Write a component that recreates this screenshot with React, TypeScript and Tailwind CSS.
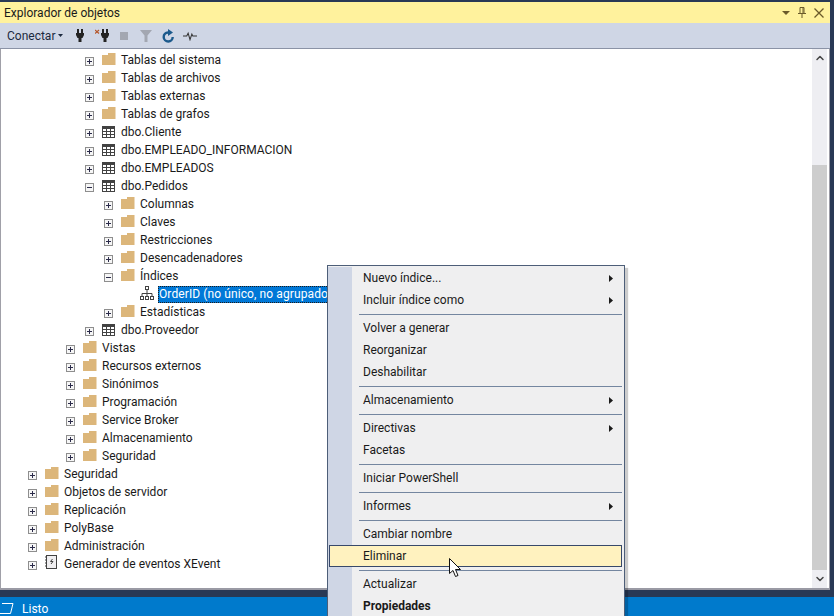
import React from 'react';
import { ChevronUp, ChevronDown } from 'lucide-react';

type IconKind = 'folder' | 'table' | 'index' | 'xevent';
type Row = { label: string; level: 0 | 1 | 2 | 3 | 4; icon: IconKind; state: 'plus' | 'minus' | 'none'; selected?: boolean };

const rows: Row[] = [
  { label: 'Tablas del sistema', level: 2, icon: 'folder', state: 'plus' },
  { label: 'Tablas de archivos', level: 2, icon: 'folder', state: 'plus' },
  { label: 'Tablas externas', level: 2, icon: 'folder', state: 'plus' },
  { label: 'Tablas de grafos', level: 2, icon: 'folder', state: 'plus' },
  { label: 'dbo.Cliente', level: 2, icon: 'table', state: 'plus' },
  { label: 'dbo.EMPLEADO_INFORMACION', level: 2, icon: 'table', state: 'plus' },
  { label: 'dbo.EMPLEADOS', level: 2, icon: 'table', state: 'plus' },
  { label: 'dbo.Pedidos', level: 2, icon: 'table', state: 'minus' },
  { label: 'Columnas', level: 3, icon: 'folder', state: 'plus' },
  { label: 'Claves', level: 3, icon: 'folder', state: 'plus' },
  { label: 'Restricciones', level: 3, icon: 'folder', state: 'plus' },
  { label: 'Desencadenadores', level: 3, icon: 'folder', state: 'plus' },
  { label: 'Índices', level: 3, icon: 'folder', state: 'minus' },
  { label: 'OrderID (no único, no agrupado)', level: 4, icon: 'index', state: 'none', selected: true },
  { label: 'Estadísticas', level: 3, icon: 'folder', state: 'plus' },
  { label: 'dbo.Proveedor', level: 2, icon: 'table', state: 'plus' },
  { label: 'Vistas', level: 1, icon: 'folder', state: 'plus' },
  { label: 'Recursos externos', level: 1, icon: 'folder', state: 'plus' },
  { label: 'Sinónimos', level: 1, icon: 'folder', state: 'plus' },
  { label: 'Programación', level: 1, icon: 'folder', state: 'plus' },
  { label: 'Service Broker', level: 1, icon: 'folder', state: 'plus' },
  { label: 'Almacenamiento', level: 1, icon: 'folder', state: 'plus' },
  { label: 'Seguridad', level: 1, icon: 'folder', state: 'plus' },
  { label: 'Seguridad', level: 0, icon: 'folder', state: 'plus' },
  { label: 'Objetos de servidor', level: 0, icon: 'folder', state: 'plus' },
  { label: 'Replicación', level: 0, icon: 'folder', state: 'plus' },
  { label: 'PolyBase', level: 0, icon: 'folder', state: 'plus' },
  { label: 'Administración', level: 0, icon: 'folder', state: 'plus' },
  { label: 'Generador de eventos XEvent', level: 0, icon: 'xevent', state: 'plus' },
];

const indent = { 0: 'pl-[27px]', 1: 'pl-[65px]', 2: 'pl-[84px]', 3: 'pl-[103px]', 4: 'pl-[122px]' };

type MenuEntry = { label?: string; arrow?: boolean; hot?: boolean; bold?: boolean };
const menu: MenuEntry[] = [
  { label: 'Nuevo índice...', arrow: true },
  { label: 'Incluir índice como', arrow: true },
  {},
  { label: 'Volver a generar' },
  { label: 'Reorganizar' },
  { label: 'Deshabilitar' },
  {},
  { label: 'Almacenamiento', arrow: true },
  {},
  { label: 'Directivas', arrow: true },
  { label: 'Facetas' },
  {},
  { label: 'Iniciar PowerShell' },
  {},
  { label: 'Informes', arrow: true },
  {},
  { label: 'Cambiar nombre' },
  { label: 'Eliminar', hot: true },
  {},
  { label: 'Actualizar' },
  { label: 'Propiedades', bold: true },
];

function Expander({ state }: { state: Row['state'] }) {
  if (state === 'none') return <span className="w-[10px] shrink-0" />;
  return (
    <svg width="10" height="10" viewBox="0 0 10 10" className="shrink-0 mt-[3px]">
      <rect x="0.5" y="0.5" width="8" height="8" fill="#f6f6f6" stroke="#8e8e8e" />
      <path d={state === 'plus' ? 'M2 4.5h5M4.5 2v5' : 'M2 4.5h5'} stroke="#2b2b4a" fill="none" />
    </svg>
  );
}

function TreeIcon({ kind }: { kind: IconKind }) {
  if (kind === 'folder') {
    return (
      <svg width="14" height="12" viewBox="0 0 14 12" className="shrink-0 self-start mt-[2px]">
        <path d="M0 2h6V0h7.5v12H0z" fill="#dcb67a" />
      </svg>
    );
  }
  if (kind === 'table') {
    return (
      <svg width="14" height="12" viewBox="0 0 14 12" className="shrink-0 self-start mt-[3px]">
        <rect x="0.5" y="0.5" width="12" height="11" fill="#fff" stroke="#424242" />
        <rect x="0" y="0" width="13" height="3" fill="#424242" />
        <path d="M0.5 5.5h12M0.5 8.5h12M4.5 3v8M8.5 3v8" stroke="#424242" fill="none" />
      </svg>
    );
  }
  if (kind === 'index') {
    return (
      <svg width="14" height="14" viewBox="0 0 14 14" className="shrink-0 self-start mt-[1px]">
        <rect x="5.5" y="0.5" width="3" height="3" fill="#fff" stroke="#424242" />
        <rect x="0.5" y="10.5" width="3" height="3" fill="#fff" stroke="#424242" />
        <rect x="5.5" y="10.5" width="3" height="3" fill="#fff" stroke="#424242" />
        <rect x="10.5" y="10.5" width="3" height="3" fill="#fff" stroke="#424242" />
        <path d="M7 4v6M2 10V7.5h10V10" stroke="#424242" fill="none" />
      </svg>
    );
  }
  return (
    <svg width="14" height="14" viewBox="0 0 14 14" className="shrink-0 self-start">
      <rect x="1.5" y="0.5" width="10" height="13" fill="#f0eff1" stroke="#424242" />
      <path d="M0 2h2M0 5h2M0 8h2M0 11h2" stroke="#424242" fill="none" />
      <path d="M7.5 4L5.5 6.5h2.500L6 9" stroke="#424242" fill="none" />
    </svg>
  );
}

function TreeRow({ row }: { row: Row }) {
  return (
    <div className={`h-[18px] flex items-center ${indent[row.level]}`}>
      <Expander state={row.state} />
      <span className="w-[7px] shrink-0" />
      <TreeIcon kind={row.icon} />
      {row.selected ? (
        <span className="ml-[4px] h-[17px] leading-[15px] tracking-[0.1px] bg-[#0078d7] text-white border border-dotted border-[#1c1c1c] whitespace-nowrap">
          {row.label}
        </span>
      ) : (
        <span className="ml-[5px] text-[#1a1a1a] whitespace-nowrap">{row.label}</span>
      )}
    </div>
  );
}

function ToolbarIcons() {
  return (
    <div className="flex items-center">
      <svg width="8" height="13" viewBox="0 0 8 13" className="ml-[13px]">
        <path d="M1 0h2v4H1zM5 0h2v4H5zM0 4h8v2L6.500 9H5.500v4h-3V9H1.500L0 6z" fill="#232323" />
      </svg>
      <svg width="14" height="13" viewBox="0 0 14 13" className="ml-[11px]">
        <path d="M7 0h2v4H7zM11 0h2v4h-2zM6 4h8v2l-1.500 3h-1v4h-3V9h-1L6 6z" fill="#232323" />
        <path d="M0 1l4 3.500M4 1L0 4.500" stroke="#b5562a" strokeWidth="1.2" fill="none" />
      </svg>
      <span className="ml-[11px] w-[8px] h-[8px] bg-[#a3a7b1]" />
      <svg width="12" height="12" viewBox="0 0 12 12" className="ml-[12px]">
        <path d="M0 0h12L7.500 5.500V12h-3V5.500z" fill="#a3a7b1" />
      </svg>
      <svg width="12" height="14" viewBox="0 0 12 14" className="ml-[10px]">
        <path d="M6 3.500a4.500 4.500 0 1 0 4.700 4.500" stroke="#1c5a8c" strokeWidth="2.400" fill="none" />
        <path d="M6 0l5 3.500-5 3.500z" fill="#1c5a8c" />
      </svg>
      <svg width="14" height="10" viewBox="0 0 15 10" className="ml-[9px]">
        <path d="M0 5h4l1.500-3 2 7 2-6 1 2H15" stroke="#333" strokeWidth="1.100" fill="none" />
      </svg>
    </div>
  );
}

function ContextMenu() {
  return (
    <div className="absolute left-[327px] top-[265px] w-[298px] h-[360px] border border-[#4d5e78] bg-[#efeff0] shadow-[3px_3px_1px_rgba(0,0,0,0.2)] p-[1px] pl-0 flex">
      <div className="w-[24px] shrink-0 bg-[#cfd6e5]" />
      <div className="flex-1 relative">
        {menu.map((item, i) =>
          item.label ? (
            <div
              key={i}
              className={`h-[22px] flex items-center justify-between pl-[11px] pr-[10px] text-[#1a1a1a] ${item.bold ? 'font-bold' : ''} ${item.hot ? '-ml-[23px] pl-[33px] mr-[1px] bg-[#fff2bf] border border-[#38496a]' : ''}`}
            >
              <span className="whitespace-nowrap">{item.label}</span>
              {item.arrow && (
                <svg width="4" height="7" viewBox="0 0 4 7">
                  <path d="M0 0l4 3.500L0 7z" fill="#1a1a1a" />
                </svg>
              )}
            </div>
          ) : (
            <div key={i} className="h-[6px] flex items-center pl-[7px] pr-[1px]">
              <div className="h-[1px] w-full bg-[#7486a0]" />
            </div>
          ),
        )}
      </div>
    </div>
  );
}

function Cursor() {
  return (
    <svg width="13" height="20" viewBox="0 0 13 20" className="absolute left-[449px] top-[558px]">
      <path d="M0.500 0.500v15l3.500-3 2.500 6 2.500-1-2.500-6h5z" fill="#fff" stroke="#111" />
    </svg>
  );
}

export default function App() {
  return (
    <div className="relative w-[834px] h-[616px] overflow-hidden bg-[#293955] flex flex-col text-[12px] font-['Roboto',sans-serif]">
      <div className="flex-1 flex flex-col pt-[2px] pr-[4px] pb-[7px] min-h-0">
        <div className="h-[21px] bg-[#fff29d] flex items-center justify-between pl-[4px] pr-[6px] text-[#1a1a1a]">
          <span>Explorador de objetos</span>
          <div className="flex items-center gap-[8px]">
            <svg width="8" height="4" viewBox="0 0 8 4"><path d="M0 0h8L4 4z" fill="#6b5a2a" /></svg>
            <svg width="8" height="11" viewBox="0 0 8 11"><path d="M2 .5h4v6H2zM0 6.500h8M4 7v4M5 1v5" stroke="#6b5a2a" fill="none" /></svg>
            <svg width="10" height="10" viewBox="0 0 10 10"><path d="M.5.500l9 9M9.500.500l-9 9" stroke="#6b5a2a" strokeWidth="1.300" fill="none" /></svg>
          </div>
        </div>
        <div className="h-[26px] bg-[#cfd6e5] flex items-center pl-[7px] border-b border-[#8b93a6]">
          <span className="w-[48px] text-[#1b293e]">Conectar</span>
          <svg width="5" height="3" viewBox="0 0 5 3" className="ml-[3px]"><path d="M0 0h5L2.500 3z" fill="#1b293e" /></svg>
          <ToolbarIcons />
        </div>
        <div className="flex-1 min-h-0 flex bg-white border-l border-[#a0a0a8] border-b-2 border-b-[#9a9aa4] border-r border-r-[#9a9aa4]">
          <div className="flex-1 min-w-0 overflow-hidden pt-[2px]">
            {rows.map((row, i) => (
              <TreeRow key={i} row={row} />
            ))}
          </div>
          <div className="w-[15px] shrink-0 mr-[2px] bg-[#eeeef2] flex flex-col items-center">
            <div className="h-[18px] flex items-center">
              <ChevronUp size={12} strokeWidth={3} className="text-[#444]" />
            </div>
            <div className="h-[98px]" />
            <div className="w-full h-[405px] bg-[#cdcdcd]" />
            <div className="flex-1 flex items-center">
              <ChevronDown size={12} strokeWidth={3} className="text-[#444]" />
            </div>
          </div>
        </div>
      </div>
      <div className="h-[19px] bg-[#007acc] flex items-center text-white pt-[4px]">
        <svg width="14" height="11" viewBox="0 0 14 11" className="shrink-0">
          <path d="M2 .5h11l-2.500 10H0" stroke="#fff" fill="none" />
        </svg>
        <span className="ml-[8px]">Listo</span>
      </div>
      <ContextMenu />
      <Cursor />
    </div>
  );
}
